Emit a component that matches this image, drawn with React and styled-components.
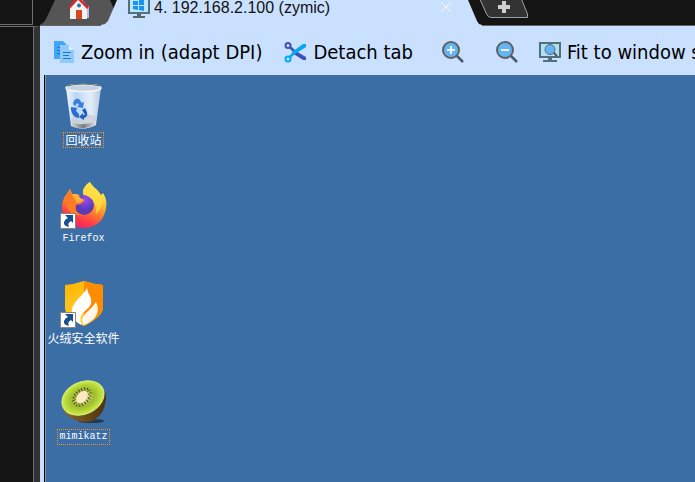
import React from "react";
import styled, { createGlobalStyle } from "styled-components";

const Global = createGlobalStyle`
  * { box-sizing: border-box; }
  html, body { margin: 0; background: #141414; }
  body { overflow: hidden; }
  button { border: 0; padding: 0; background: none; color: inherit; font: inherit; cursor: default; }
`;

const Shell = styled.div`
  display: grid;
  grid-template-columns: 40px minmax(0, 1fr);
  grid-template-rows: 26px minmax(0, 1fr);
  height: 100vh;
  overflow: hidden;
  background: #141414;
`;

const Corner = styled.div`
  margin: 0 7px 1px 0;
  border-right: 1px solid #6c6c6c;
  border-bottom: 1px solid #6c6c6c;
`;

const SidePanel = styled.aside`
  border-top: 1px solid #6c6c6c;
  border-right: 6px solid #333333;
  display: flex;
  &::after {
    content: "";
    margin-left: auto;
    width: 1px;
    background: #6c6c6c;
  }
`;

const TabBar = styled.nav`
  display: flex;
  align-items: flex-start;
  height: 26px;
  border-bottom: 1px solid #626262;
`;

const HomeTab = styled.button`
  flex: none;
  width: 76px;
  height: 25px;
  padding-left: 28px;
  display: flex;
  background: #555555;
  clip-path: polygon(15px 0, 70px 0, 76px 14px, 76px 100%, 0 100%, 4px 22px, 6px 19px);
`;

const SessionTab = styled.button`
  flex: none;
  width: 381px;
  height: 26px;
  margin-left: -15px;
  padding: 0 30px 0 27px;
  display: flex;
  align-items: flex-start;
  gap: 4px;
  background: #cae0ff;
  color: #111111;
  font: 16px/16px "Liberation Sans", Arial, sans-serif;
  clip-path: polygon(
    16px 0, calc(100% - 14px) 0, calc(100% - 5px) 21px, calc(100% - 3px) 24px, 100% 25px,
    100% 100%, 0 100%, 0 25px, 4px 24px, 7px 21px
  );
`;

const CloseMark = styled.span`
  margin-left: auto;
  display: flex;
`;

const AddTab = styled.button`
  flex: none;
  width: 48px;
  height: 18px;
  margin-left: -2px;
`;

const Session = styled.main`
  display: flex;
  flex-direction: column;
  padding-left: 4px;
  min-height: 0;
  background: #cae0ff;
`;

const Toolbar = styled.div`
  flex: none;
  display: flex;
  align-items: center;
  height: 49px;
  padding: 3px 0 0 10px;
  overflow: hidden;
  color: #000000;
  font: 20px/28px "DejaVu Sans Condensed", Tahoma, sans-serif;
`;

const Tool = styled.button`
  flex: none;
  display: flex;
  align-items: center;
  gap: 6px;
  white-space: nowrap;
  margin-right: ${({ $gap }) => $gap}px;
`;

const Desktop = styled.section`
  flex: 1;
  min-height: 0;
  border-left: 1px solid #000000;
  box-shadow: inset 1px 0 #8b98a5;
  background: #3a6ea5;
  display: flex;
  flex-direction: column;
  align-items: flex-start;
  padding: 7px 0 0 1px;
`;

const Shortcut = styled.button`
  position: relative;
  flex: none;
  width: 75px;
  height: 99px;
  display: flex;
  flex-direction: column;
  align-items: center;
  gap: 2px;
  color: #ffffff;
`;

const ShortcutName = styled.span`
  border: 1px dotted ${({ $marked }) => ($marked ? "#ff9020" : "transparent")};
  padding: 0 1px;
  white-space: nowrap;
  font: ${({ $latin }) => ($latin ? "10px" : "12px")}/14px ${({ $latin }) =>
    $latin ? '"Liberation Mono"' : '"Noto Sans CJK SC"'}, monospace;
`;

const Arrow = styled.svg`
  position: absolute;
  left: 14px;
  top: 32px;
`;

const Icon = styled.svg`
  display: block;
  flex: none;
`;

const HomeIcon = () => (
  <Icon width="24" height="20" viewBox="0 0 24 20">
    <path d="M5 6H21V18H5Z" fill="#b6b9e8" />
    <path d="M2 6L11 -4L19 6V19H2Z" fill="#f3f3f3" />
    <path d="M1 8L10 -2L20 8" fill="none" stroke="#d9282b" strokeWidth="2.5" />
    <path d="M8 10H14V19H8Z" fill="#d9461b" />
    <circle cx="11" cy="5.500" r="2" fill="#2478ad" />
  </Icon>
);

const MonitorIcon = () => (
  <Icon width="22" height="18" viewBox="0 0 22 18">
    <path d="M1 -5H21V13H1Z" fill="#bde6fa" stroke="#53717c" strokeWidth="2" />
    <path d="M5 1H10V5H5ZM11 0L16 -1V5H11ZM5 6H10V10L5 9ZM11 6H16V11L11 10Z" fill="#1692f5" />
    <path d="M9 14H13V16H17V18H5V16H9Z" fill="#53656d" />
  </Icon>
);

const CopyIcon = () => (
  <Icon width="21" height="22" viewBox="0 0 21 22">
    <path d="M0 0H9L13 4V18H0Z" fill="#42a5f5" />
    <path d="M3 6.500H8M3 9.500H8M3 12.500H8" stroke="#1976d2" />
    <path d="M6 4H15L20 9V22H6Z" fill="#90caf9" />
    <path d="M15 4V9H20Z" fill="#dff2ff" />
    <path d="M9 11.500H17M9 14.500H15M9 17.500H17" stroke="#1976d2" />
  </Icon>
);

const ScissorsIcon = () => (
  <Icon width="23" height="21" viewBox="0 0 23 21">
    <g fill="none">
      <circle cx="4" cy="3.500" r="2.500" stroke="#3f51b5" strokeWidth="2" />
      <path d="M6 5L11 10" stroke="#3f51b5" strokeWidth="2.500" />
      <path d="M10 8L22 15V18L19 18L8 11Z" fill="#3f51b5" />
      <circle cx="4" cy="17" r="2.500" stroke="#03a9f4" strokeWidth="2" />
      <path d="M6 15L11 10" stroke="#03a9f4" strokeWidth="2.500" />
      <path d="M8 10L19 2L22 2V5L11 12Z" fill="#03a9f4" />
    </g>
  </Icon>
);

const MagnifierIcon = ({ plus }) => (
  <Icon width="22" height="22" viewBox="0 0 22 22">
    <path d="M14 14L21 21" stroke="#455a64" strokeWidth="2.500" />
    <circle cx="9" cy="9" r="8" fill="#64b5f6" stroke="#616161" strokeWidth="2" />
    <path d={plus ? "M5 9H13M9 5V13" : "M5 9H13"} stroke="#e8f5ff" strokeWidth="2" />
  </Icon>
);

const FitIcon = () => (
  <Icon width="22" height="20" viewBox="0 0 22 20">
    <path d="M1 1H21V15H1Z" fill="#b0e0f2" stroke="#546e7a" strokeWidth="2" />
    <path d="M9 16H13V18H18V20H4V18H9Z" fill="#546e7a" />
    <path d="M14 10L18 14" stroke="#455a64" strokeWidth="2" />
    <circle cx="11" cy="7.500" r="5" fill="#64b5f6" stroke="#5f6c76" />
  </Icon>
);

const CloseIcon = () => (
  <Icon width="12" height="14" viewBox="0 0 12 14">
    <path d="M1 2L11 12M11 2L1 12" stroke="#f4f9ff" />
  </Icon>
);

const AddIcon = () => (
  <Icon width="48" height="18" viewBox="0 0 48 18">
    <path d="M-.5 -2L6 13Q8 17.500 11 17.500H47.500V14L41 -2Z" fill="#333333" stroke="#98a2ae" />
    <path d="M18 7H30M24 1V13" stroke="#cfcfcf" strokeWidth="4" />
  </Icon>
);

const BinIcon = () => (
  <Icon width="48" height="48" viewBox="0 0 48 48">
    <defs>
      <linearGradient id="bin" x2="1">
        <stop stopColor="#eef5fb" /><stop offset=".3" stopColor="#b9d5f5" />
        <stop offset=".7" stopColor="#e4eefa" /><stop offset="1" stopColor="#b4c8dc" />
      </linearGradient>
      <linearGradient id="base" x2="1">
        <stop stopColor="#d9d9d9" /><stop offset=".5" stopColor="#777b80" /><stop offset="1" stopColor="#e3e5e7" />
      </linearGradient>
    </defs>
    <path d="M6 6L11 44Q23 50 36 43L41 6Z" fill="url(#bin)" />
    <path d="M11 36Q24 29 37 35L36 39Q24 45 11 40Z" fill="#c9cfd5" opacity=".8" />
    <path d="M11 40Q24 45 36 39L36 43Q24 49 12 44Z" fill="url(#base)" />
    <ellipse cx="23.500" cy="6" rx="17.500" ry="3.500" fill="#c3d3e3" stroke="#f1f4f6" strokeWidth="1.500" />
    <path d="M7 4Q23 0 40 4" stroke="#59646d" fill="none" />
    <path d="M13 22Q14 16 19 17L22 21L24 20L23 26L17 25L19 23L17 21L15 24Z" fill="#3b7fdc" />
    <path d="M11 25L17 26L16 29L19 32V36Q12 35 11 28Z" fill="#2a6ed2" />
    <path d="M22 28L25 26Q30 34 24 36V38L19 35L23 31V33H25Z" fill="#1e5fc4" />
  </Icon>
);

const FirefoxIcon = () => (
  <Icon width="48" height="48" viewBox="0 0 48 48">
    <defs>
      <linearGradient id="fire" x1=".8" y1="0" x2=".35" y2="1">
        <stop stopColor="#fff44f" /><stop offset=".3" stopColor="#ffd23a" />
        <stop offset=".55" stopColor="#ff8a2a" /><stop offset=".8" stopColor="#ff3f45" /><stop offset="1" stopColor="#f0206e" />
      </linearGradient>
      <radialGradient id="globe" cx=".55" cy=".25"><stop stopColor="#9a4cf0" /><stop offset="1" stopColor="#5a3ab8" /></radialGradient>
    </defs>
    <path d="M30 1C32 6 38 8 41 14L43 12C46 17 47 21 46 27C44 41 34 47 24 47C11 47 2 38 2 26C2 21 3 18 6 14L10 8L12 13L17 13L23 17V9Q26 3 30 1Z" fill="url(#fire)" />
    <circle cx="24" cy="24" r="10" fill="url(#globe)" />
    <path d="M23 9Q26 3 30 1C32 6 40 9 42 18Q43 27 36 33Q37 21 29 16Q23 14 23 9Z" fill="#ffdf42" opacity=".7" />
    <path d="M4 18L10 8L12 13L17 13L20 17L24 19Q24 23 16 24Q14 31 22 34Q10 36 6 24Z" fill="#ff7a24" />
    <path d="M12 13L17 13L20 17L24 19Q21 22 17 22Q14 18 12 13Z" fill="#ffb238" />
  </Icon>
);

const ShieldIcon = () => (
  <Icon width="48" height="48" viewBox="0 0 48 48">
    <defs><linearGradient id="shield" x2=".5" y2="1"><stop stopColor="#ffb400" /><stop offset="1" stopColor="#ffd238" /></linearGradient></defs>
    <path d="M24 1Q33 4 43 5V28Q42 37 24 46Q5 37 5 28V5Q15 4 24 1Z" fill="url(#shield)" />
    <path d="M24 1Q33 4 43 5V28Q42 37 24 46Z" fill="#ff8b00" />
    <path d="M27 8Q25 12 18 19Q9 28 13 36Q16 43 22 45Q17 37 26 30Q34 24 30 16Q28 13 27 8Z" fill="#ffffff" />
    <path d="M36 22Q33 27 27 32Q19 39 24 45Q34 41 37 34Q39 28 36 22Z" fill="#fff6ec" />
  </Icon>
);

const KiwiIcon = () => (
  <Icon width="48" height="48" viewBox="0 0 48 48">
    <defs>
      <radialGradient id="flesh"><stop offset=".2" stopColor="#dce38c" /><stop offset=".5" stopColor="#9db833" /><stop offset=".8" stopColor="#b5d936" /><stop offset="1" stopColor="#d0ea5c" /></radialGradient>
      <linearGradient id="skin" x2="1"><stop stopColor="#8a6a2a" /><stop offset="1" stopColor="#4f300d" /></linearGradient>
    </defs>
    <ellipse cx="31" cy="42" rx="13" ry="2" fill="#1c2c3c" opacity=".8" />
    <path d="M3 31Q10 43 28 43Q46 39 46 15L40 8Z" fill="url(#skin)" />
    <ellipse cx="23" cy="19" rx="22" ry="16" transform="rotate(-25 23 19)" fill="url(#flesh)" stroke="#d8f070" />
    <ellipse cx="22" cy="18" rx="10" ry="7" transform="rotate(-45 22 18)" fill="none" stroke="#3c3c10" strokeWidth="2" strokeDasharray="1 2" />
    <ellipse cx="22" cy="18" rx="8" ry="5.500" transform="rotate(-45 22 18)" fill="none" stroke="#3c3c10" strokeDasharray="1 2" />
    <ellipse cx="22" cy="18" rx="7" ry="4.500" transform="rotate(-50 22 18)" fill="#ffe9c4" />
  </Icon>
);

const LinkArrow = () => (
  <Arrow width="16" height="16" viewBox="0 0 16 16">
    <path d="M.5 .5H15.500V15.500H.5Z" fill="#ffffff" stroke="#89857f" />
    <path d="M5 2H13V10L11 8Q7 10 9 14Q3 13 4 9Q5 6 8 5Z" fill="#1d4e91" />
  </Arrow>
);

const shortcuts = [
  { name: "回收站", Picture: BinIcon, marked: true },
  { name: "Firefox", Picture: FirefoxIcon, latin: true, link: true },
  { name: "火绒安全软件", Picture: ShieldIcon, link: true },
  { name: "mimikatz", Picture: KiwiIcon, latin: true, marked: true },
];

export default function App() {
  return (
    <>
      <Global />
      <Shell>
        <Corner />
        <TabBar>
          <HomeTab aria-label="Home"><HomeIcon /></HomeTab>
          <SessionTab>
            <MonitorIcon />
            <span>4. 192.168.2.100 (zymic)</span>
            <CloseMark><CloseIcon /></CloseMark>
          </SessionTab>
          <AddTab aria-label="New tab"><AddIcon /></AddTab>
        </TabBar>
        <SidePanel />
        <Session>
          <Toolbar>
            <Tool $gap={22}><CopyIcon />Zoom in (adapt DPI)</Tool>
            <Tool $gap={29}><ScissorsIcon />Detach tab</Tool>
            <Tool $gap={32} aria-label="Zoom in"><MagnifierIcon plus /></Tool>
            <Tool $gap={21} aria-label="Zoom out"><MagnifierIcon /></Tool>
            <Tool $gap={0}><FitIcon />Fit to window size</Tool>
          </Toolbar>
          <Desktop>
            {shortcuts.map(({ name, Picture, marked, latin, link }) => (
              <Shortcut key={name}>
                <Picture />
                {link && <LinkArrow />}
                <ShortcutName $marked={marked} $latin={latin}>{name}</ShortcutName>
              </Shortcut>
            ))}
          </Desktop>
        </Session>
      </Shell>
    </>
  );
}
